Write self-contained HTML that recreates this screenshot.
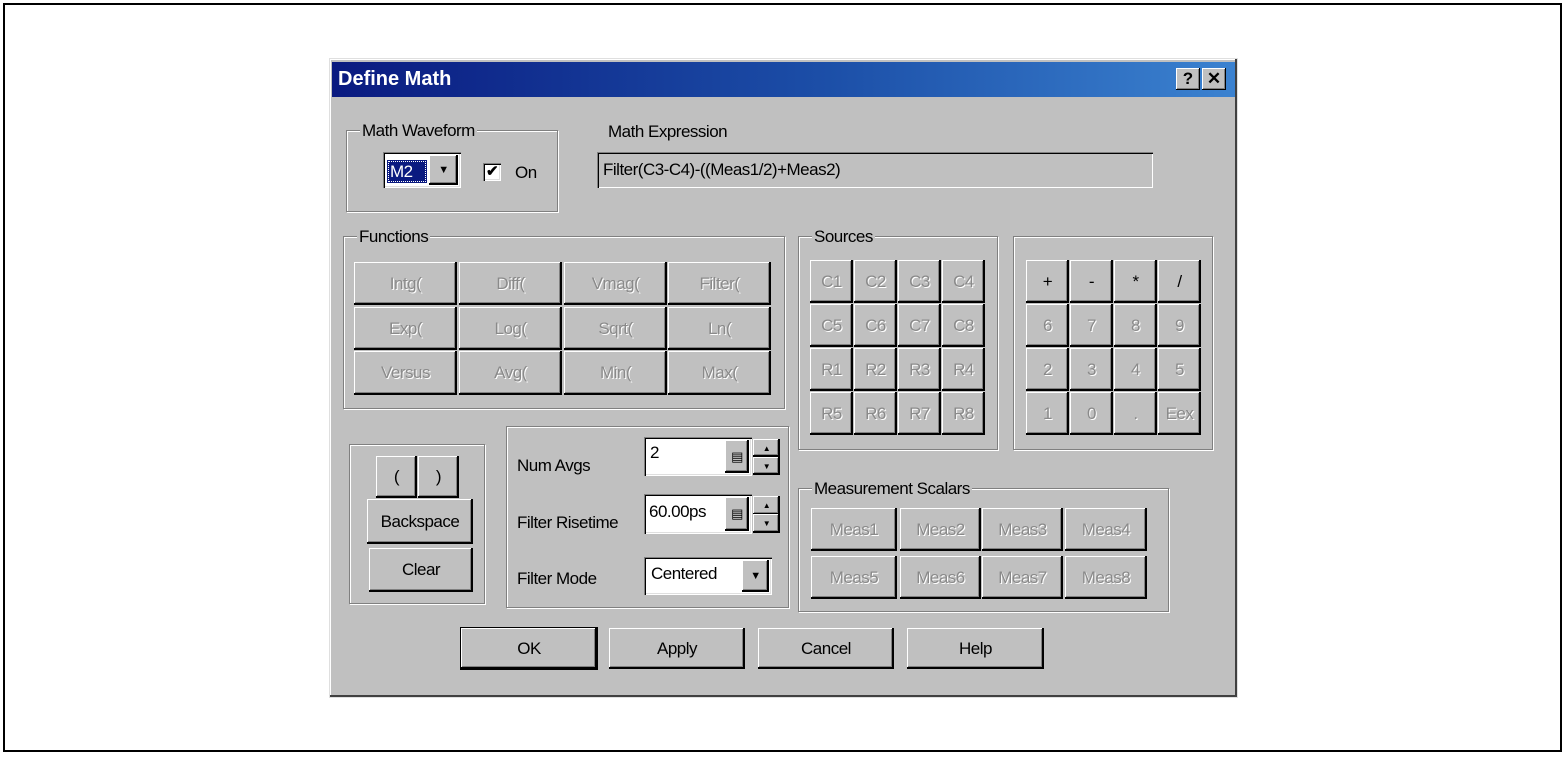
<!DOCTYPE html>
<html><head><style>
*{box-sizing:border-box;margin:0;padding:0}
body{width:1566px;height:757px;background:#fff;position:relative;overflow:hidden;font-family:"Liberation Sans",sans-serif;font-size:17px;letter-spacing:-0.5px;color:#000}
.a{position:absolute}
.frame{left:3px;top:3px;width:1559px;height:749px;border:2px solid #000}
.dlg{left:329px;top:58px;width:909px;height:640px;background:#c0c0c0;border:1px solid #dfdfdf;box-shadow:inset -2px -2px 0 #404040,inset 1px 1px 0 #fff}
.title{left:332px;top:62px;width:903px;height:35px;background:linear-gradient(to right,#0a1a80 0%,#1c4fa8 55%,#3b82d0 100%);color:#fff;font-weight:bold;font-size:20px;line-height:35px;padding-left:6px;letter-spacing:0}
.tb{top:68px;width:24px;height:22px;background:#c0c0c0;box-shadow:inset -1px -1px 0 #000,inset 1px 1px 0 #fff,inset -2px -2px 0 #808080;font-weight:bold;font-size:17px;text-align:center;line-height:22px;color:#000;letter-spacing:0}
.grp{border:1px solid #808080;box-shadow:1px 1px 0 #fff,inset 1px 1px 0 #fff}
.lbl{background:#c0c0c0;padding:0 2px;line-height:18px}
.btn{background:#c0c0c0;box-shadow:inset -2px -2px 0 #000,inset 1px 1px 0 #fff,inset -3px -3px 0 #808080;text-align:center;display:flex;align-items:center;justify-content:center}
.dis{color:#8a8a8a;text-shadow:1px 1px 0 #fff}
.sunk{background:#fff;box-shadow:inset 1px 1px 0 #808080,inset 2px 2px 0 #000,inset -1px -1px 0 #fff,inset -2px -2px 0 #dfdfdf}
</style></head><body>
<div class="a frame"></div>
<div class="a dlg"></div>
<div class="a title">Define Math</div>
<div class="a tb" style="left:1176px">?</div>
<div class="a tb" style="left:1202px">✕</div>

<div class="a grp" style="left:346px;top:130px;width:212px;height:82px"></div>
<div class="a lbl" style="left:360px;top:122px">Math Waveform</div>
<div class="a sunk" style="left:383px;top:152px;width:78px;height:36px"></div>
<div class="a" style="left:387px;top:160px;width:40px;height:23px;background:#0a1a80;color:#fff;outline:1px dotted #fff;outline-offset:-2px;line-height:23px;padding-left:3px">M2</div>
<div class="a btn" style="left:429px;top:155px;width:29px;height:30px;font-size:11px">▼</div>
<div class="a sunk" style="left:483px;top:163px;width:18px;height:18px;font-size:15px;font-weight:bold;line-height:18px;text-align:center">✔</div>
<div class="a" style="left:515px;top:163px">On</div>

<div class="a" style="left:608px;top:122px">Math Expression</div>
<div class="a" style="left:597px;top:152px;width:556px;height:36px;box-shadow:inset 1px 1px 0 #808080,inset 2px 2px 0 #000,inset -1px -1px 0 #fff;line-height:36px;padding-left:6px">Filter(C3-C4)-((Meas1/2)+Meas2)</div>

<div class="a grp" style="left:343px;top:236px;width:442px;height:173px"></div>
<div class="a lbl" style="left:357px;top:228px">Functions</div>
<div class="a btn dis" style="left:354px;top:262px;width:103px;height:43px">Intg(</div>
<div class="a btn dis" style="left:459px;top:262px;width:103px;height:43px">Diff(</div>
<div class="a btn dis" style="left:564px;top:262px;width:103px;height:43px">Vmag(</div>
<div class="a btn dis" style="left:668px;top:262px;width:103px;height:43px">Filter(</div>
<div class="a btn dis" style="left:354px;top:307px;width:103px;height:43px">Exp(</div>
<div class="a btn dis" style="left:459px;top:307px;width:103px;height:43px">Log(</div>
<div class="a btn dis" style="left:564px;top:307px;width:103px;height:43px">Sqrt(</div>
<div class="a btn dis" style="left:668px;top:307px;width:103px;height:43px">Ln(</div>
<div class="a btn dis" style="left:354px;top:351px;width:103px;height:44px">Versus</div>
<div class="a btn dis" style="left:459px;top:351px;width:103px;height:44px">Avg(</div>
<div class="a btn dis" style="left:564px;top:351px;width:103px;height:44px">Min(</div>
<div class="a btn dis" style="left:668px;top:351px;width:103px;height:44px">Max(</div>

<div class="a grp" style="left:798px;top:236px;width:200px;height:214px"></div>
<div class="a lbl" style="left:812px;top:228px">Sources</div>
<div class="a" style="left:810px;top:260px;display:grid;grid-template-columns:repeat(4,43px);grid-auto-rows:43px;gap:1px 1px">
<div class="btn dis">C1</div><div class="btn dis">C2</div><div class="btn dis">C3</div><div class="btn dis">C4</div>
<div class="btn dis">C5</div><div class="btn dis">C6</div><div class="btn dis">C7</div><div class="btn dis">C8</div>
<div class="btn dis">R1</div><div class="btn dis">R2</div><div class="btn dis">R3</div><div class="btn dis">R4</div>
<div class="btn dis">R5</div><div class="btn dis">R6</div><div class="btn dis">R7</div><div class="btn dis">R8</div>
</div>

<div class="a grp" style="left:1013px;top:236px;width:200px;height:214px"></div>
<div class="a" style="left:1026px;top:260px;display:grid;grid-template-columns:repeat(4,43px);grid-auto-rows:43px;gap:1px 1px">
<div class="btn">+</div><div class="btn">-</div><div class="btn">*</div><div class="btn">/</div>
<div class="btn dis">6</div><div class="btn dis">7</div><div class="btn dis">8</div><div class="btn dis">9</div>
<div class="btn dis">2</div><div class="btn dis">3</div><div class="btn dis">4</div><div class="btn dis">5</div>
<div class="btn dis">1</div><div class="btn dis">0</div><div class="btn dis">.</div><div class="btn dis">Eex</div>
</div>

<div class="a grp" style="left:349px;top:444px;width:136px;height:160px"></div>
<div class="a btn" style="left:376px;top:456px;width:41px;height:42px">(</div>
<div class="a btn" style="left:418px;top:456px;width:41px;height:42px">)</div>
<div class="a btn" style="left:367px;top:499px;width:106px;height:45px">Backspace</div>
<div class="a btn" style="left:369px;top:548px;width:104px;height:44px">Clear</div>

<div class="a grp" style="left:506px;top:426px;width:283px;height:182px"></div>
<div class="a" style="left:517px;top:456px">Num Avgs</div>
<div class="a" style="left:517px;top:513px">Filter Risetime</div>
<div class="a" style="left:517px;top:569px">Filter Mode</div>
<div class="a sunk" style="left:644px;top:437px;width:108px;height:39px;padding:6px 0 0 6px">2</div>
<div class="a btn" style="left:725px;top:440px;width:24px;height:33px;font-size:13px">▤</div>
<div class="a btn" style="left:753px;top:439px;width:27px;height:18px;font-size:8px">▲</div>
<div class="a btn" style="left:753px;top:457px;width:27px;height:18px;font-size:8px">▼</div>
<div class="a sunk" style="left:644px;top:494px;width:108px;height:40px;padding:8px 0 0 5px">60.00ps</div>
<div class="a btn" style="left:725px;top:497px;width:24px;height:34px;font-size:13px">▤</div>
<div class="a btn" style="left:753px;top:496px;width:27px;height:19px;font-size:8px">▲</div>
<div class="a btn" style="left:753px;top:514px;width:27px;height:19px;font-size:8px">▼</div>
<div class="a sunk" style="left:644px;top:557px;width:128px;height:38px;padding:7px 0 0 7px">Centered</div>
<div class="a btn" style="left:742px;top:560px;width:27px;height:32px;font-size:11px">▼</div>

<div class="a grp" style="left:798px;top:488px;width:371px;height:124px"></div>
<div class="a lbl" style="left:812px;top:480px">Measurement Scalars</div>
<div class="a btn dis" style="left:811px;top:508px;width:86px;height:43px">Meas1</div>
<div class="a btn dis" style="left:900px;top:508px;width:81px;height:43px">Meas2</div>
<div class="a btn dis" style="left:982px;top:508px;width:81px;height:43px">Meas3</div>
<div class="a btn dis" style="left:1065px;top:508px;width:82px;height:43px">Meas4</div>
<div class="a btn dis" style="left:811px;top:556px;width:86px;height:43px">Meas5</div>
<div class="a btn dis" style="left:900px;top:556px;width:81px;height:43px">Meas6</div>
<div class="a btn dis" style="left:982px;top:556px;width:81px;height:43px">Meas7</div>
<div class="a btn dis" style="left:1065px;top:556px;width:82px;height:43px">Meas8</div>

<div class="a btn" style="left:461px;top:628px;width:136px;height:41px;box-shadow:0 0 0 1px #000,inset -2px -2px 0 #000,inset 1px 1px 0 #fff,inset -3px -3px 0 #808080">OK</div>
<div class="a btn" style="left:609px;top:628px;width:136px;height:41px">Apply</div>
<div class="a btn" style="left:758px;top:628px;width:136px;height:41px">Cancel</div>
<div class="a btn" style="left:907px;top:628px;width:137px;height:41px">Help</div>
</body></html>
